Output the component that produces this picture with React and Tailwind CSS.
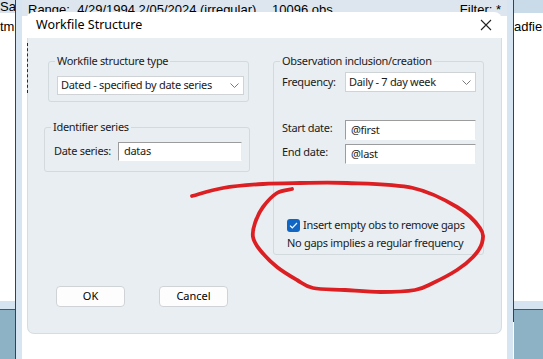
import React from 'react';

// pontos do traço vermelho (anotação à mão)
const inkPoints = [
  [192, 196], [223, 188], [263, 184], [300, 183], [347, 183], [413, 188],
  [457, 207], [480, 228], [482, 243], [473, 257], [457, 270], [433, 283],
  [415, 290], [381, 292], [345, 290], [313, 288], [297, 280], [277, 267],
  [260, 250], [253, 237], [255, 223], [263, 207], [277, 193], [292, 189],
];

function smoothPath(p) {
  let d = `M${p[0][0]},${p[0][1]}`;
  for (let i = 0; i < p.length - 1; i++) {
    const p0 = p[i - 1] || p[i];
    const p1 = p[i];
    const p2 = p[i + 1];
    const p3 = p[i + 2] || p2;
    const c1 = [p1[0] + (p2[0] - p0[0]) / 6, p1[1] + (p2[1] - p0[1]) / 6];
    const c2 = [p2[0] - (p3[0] - p1[0]) / 6, p2[1] - (p3[1] - p1[1]) / 6];
    d += ` C${c1[0].toFixed(1)},${c1[1].toFixed(1)} ${c2[0].toFixed(1)},${c2[1].toFixed(1)} ${p2[0]},${p2[1]}`;
  }
  return d;
}

const inkPath = smoothPath(inkPoints);

const Chevron = () => (
  <svg width="9" height="5" viewBox="0 0 9 5" className="shrink-0">
    <path d="M0.5 0.5 L4.5 4.5 L8.5 0.5" fill="none" stroke="#7a7a7a" strokeWidth="1" />
  </svg>
);

const Select = ({ value, className = '' }) => (
  <div className={`flex items-center justify-between bg-white border border-[#cfd3d6] pl-[3px] pr-[4px] ${className}`}>
    <span className="whitespace-nowrap">{value}</span>
    <Chevron />
  </div>
);

const Field = ({ value, className = '' }) => (
  <div className={`flex items-center bg-white border-t border-l border-[#9c9c9c] border-r border-b border-r-[#e9ecee] border-b-[#ffffff] pl-[5px] ${className}`}>
    <span>{value}</span>
  </div>
);

const Group = ({ title, className = '', children }) => (
  <div className={`relative border border-[#d3dade] rounded-[3px] ${className}`}>
    <span className="absolute -top-[9px] left-[6px] px-[2px] bg-[#e8eef2] leading-[16px] whitespace-nowrap">{title}</span>
    {children}
  </div>
);

export default function App() {
  return (
    <div className="relative w-[543px] h-[359px] overflow-hidden bg-white font-['Noto_Sans',sans-serif] text-[11px] tracking-[-0.3px] text-[#1b1b1b]">
      {/* janela de trás, à esquerda */}
      <div className="absolute left-0 top-0 w-[15px] h-full flex flex-col font-['Liberation_Sans',sans-serif] text-[13px] tracking-normal text-black">
        <div className="h-[13px] bg-[#dae3eb] leading-[13px] whitespace-nowrap">Sav</div>
        <div className="flex-1 bg-white pt-[7px] leading-[14px] whitespace-nowrap">tmp</div>
        <div className="h-[8px] bg-[#d6e3f0]" />
        <div className="h-[50px] bg-[#8db1c5] border-t border-[#4a5660]" />
      </div>
      <div className="absolute left-[15px] top-0 w-px h-full bg-[#3b4148]" />

      {/* janela do workfile */}
      <div className="absolute left-[16px] top-0 w-[497px] h-full bg-[#d7e4f1] px-[6px]">
        <div className="h-full flex flex-col bg-white">
          <div className="h-[16px] bg-[#dde6ee] flex items-start pl-[6px] pr-[6px] pt-[3px] font-['Liberation_Sans',sans-serif] text-[13px] tracking-normal leading-[14px] text-black whitespace-nowrap">
            <span className="w-[244px]">Range:&nbsp; 4/29/1994 2/05/2024 (irregular)</span>
            <span>10096 obs</span>
            <span className="ml-auto">Filter: *</span>
          </div>
        </div>
      </div>

      {/* janela da direita */}
      <div className="absolute left-[513px] top-0 w-px h-[322px] bg-[#3b4148]" />
      <div className="absolute left-[514px] top-0 w-[29px] h-full flex flex-col font-['Liberation_Sans',sans-serif] text-[13px] tracking-normal text-black">
        <div className="h-[13px] bg-[#c9dae8]" />
        <div className="flex-1 bg-white pt-[7px] leading-[14px] whitespace-nowrap">adfie</div>
        <div className="h-[8px] bg-[#d6e3f0]" />
        <div className="h-[50px] bg-[#8db1c5] border-t border-[#4a5660]" />
      </div>

      {/* diálogo */}
      <div className="absolute left-[26px] top-[12px] w-[476px] h-[347px] flex flex-col">
        <div className="h-[26px] shrink-0 bg-white rounded-t-[8px] flex items-center justify-between pl-[10px] pr-[10px]">
          <span className="text-[12.5px] tracking-normal text-black">Workfile Structure</span>
          <svg width="12" height="12" viewBox="0 0 12 12">
            <path d="M1 1 L11 11 M11 1 L1 11" stroke="#222" strokeWidth="1.1" />
          </svg>
        </div>
        <div className="relative ml-[1px] h-[296px] bg-[#e8eef2] border-b border-l border-r border-[#d6dde2] rounded-b-[7px] pt-[23px] pl-[16px]">
          <div className="absolute -left-px top-[5px] h-[50px] border-l border-dashed border-[#2a2a2a]" />
          <div className="flex items-start gap-[23px]">
            <div className="flex flex-col w-[206px]">
              <Group title="Workfile structure type" className="ml-[4px] w-[201px] h-[41px] pl-[8px] pt-[14px]">
                <Select value="Dated - specified by date series" className="w-[187px] h-[19px]" />
              </Group>
              <Group title="Identifier series" className="mt-[25px] w-[206px] h-[45px] pl-[9px] pt-[14px]">
                <div className="flex items-center">
                  <span className="w-[64px] whitespace-nowrap">Date series:</span>
                  <Field value="datas" className="w-[124px] h-[19px]" />
                </div>
              </Group>
            </div>

            <Group title="Observation inclusion/creation" className="w-[211px] h-[194px] pl-[8px] pt-[10px]">
              <div className="flex items-center h-[20px]">
                <span className="w-[63px] whitespace-nowrap">Frequency:</span>
                <Select value="Daily - 7 day week" className="w-[131px] h-[20px]" />
              </div>
              <div className="flex items-center h-[20px] mt-[28px]">
                <span className="w-[63px] whitespace-nowrap -mt-[3px]">Start date:</span>
                <Field value="@first" className="w-[131px] h-[20px]" />
              </div>
              <div className="flex items-center h-[20px] mt-[4px]">
                <span className="w-[63px] whitespace-nowrap -mt-[3px]">End date:</span>
                <Field value="@last" className="w-[131px] h-[20px]" />
              </div>
              <div className="ml-[5px] mt-[54px] flex items-center gap-[3px] h-[14px]">
                <div className="w-[13px] h-[13px] rounded-[3px] bg-[#0f66c4] flex items-center justify-center">
                  <svg width="9" height="7" viewBox="0 0 9 7">
                    <path d="M1 3.6 L3.3 5.8 L8 1" fill="none" stroke="#fff" strokeWidth="1.2" />
                  </svg>
                </div>
                <span className="whitespace-nowrap">Insert empty obs to remove gaps</span>
              </div>
              <div className="ml-[5px] mt-[3px] whitespace-nowrap leading-[16px]">No gaps implies a regular frequency</div>
            </Group>
          </div>

          <div className="flex gap-[34px] ml-[12px] mt-[31px]">
            <button className="w-[69px] h-[21px] bg-[#fdfdfd] border border-[#d0d3d6] rounded-[4px] text-black tracking-normal">OK</button>
            <button className="w-[69px] h-[21px] bg-[#fdfdfd] border border-[#d0d3d6] rounded-[4px] text-black tracking-normal">Cancel</button>
          </div>
        </div>
      </div>

      {/* anotação vermelha */}
      <svg className="absolute inset-0 pointer-events-none" width="543" height="359" viewBox="0 0 543 359">
        <path d={inkPath} fill="none" stroke="#dc1f22" strokeWidth="3.8" strokeLinecap="round" strokeLinejoin="round" />
      </svg>
    </div>
  );
}
